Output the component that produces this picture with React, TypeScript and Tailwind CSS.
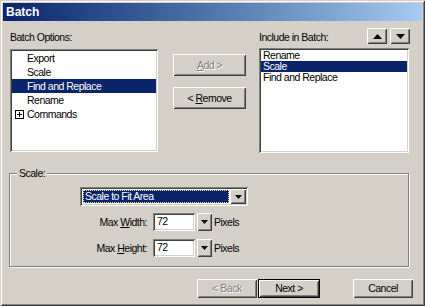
import React from 'react';

const raised =
    'bg-[#d4d0c8] shadow-[inset_1px_1px_0_#fff,inset_-1px_-1px_0_#404040,inset_2px_2px_0_#d4d0c8,inset_-2px_-2px_0_#808080]';
const sunken =
    'shadow-[inset_1px_1px_0_#808080,inset_-1px_-1px_0_#fff,inset_2px_2px_0_#404040,inset_-2px_-2px_0_#d4d0c8]';

const DownTri: React.FC<{ w?: number; h?: number }> = ({ w = 7, h = 4 }) => (
    <svg width={w} height={h} viewBox={`0 0 ${w} ${h}`} className="block">
        <polygon points={`0,0 ${w},0 ${w / 2},${h}`} fill="#000" />
    </svg>
);

const UpTri: React.FC<{ w?: number; h?: number }> = ({ w = 9, h = 5 }) => (
    <svg width={w} height={h} viewBox={`0 0 ${w} ${h}`} className="block">
        <polygon points={`0,${h} ${w},${h} ${w / 2},0`} fill="#000" />
    </svg>
);

const PlusBox: React.FC = () => (
    <svg width="9" height="9" viewBox="0 0 9 9" className="block">
        <rect x="0.5" y="0.5" width="8" height="8" fill="#fff" stroke="#000" />
        <path d="M2 4.5h5M4.5 2v5" stroke="#000" />
    </svg>
);

const Button: React.FC<{ className?: string; disabled?: boolean; children: React.ReactNode }> = ({
    className = '',
    disabled,
    children,
}) => (
    <div
        className={`${raised} flex items-center justify-center ${
            disabled ? 'text-[#808080] [text-shadow:1px_1px_0_#fff]' : 'text-black'
        } ${className}`}
    >
        {children}
    </div>
);

const options = ['Export', 'Scale', 'Find and Replace', 'Rename'];
const included = ['Rename', 'Scale', 'Find and Replace'];

const SizeRow: React.FC<{ label: React.ReactNode; className?: string }> = ({ label, className = '' }) => (
    <div className={`flex items-center ${className}`}>
        <div className="w-[137px] text-right">{label}</div>
        <div className={`ml-[6px] w-[42px] h-[18px] bg-white ${sunken} pl-[4px] pt-[2px] leading-[13px]`}>72</div>
        <div className={`ml-[2px] w-[15px] h-[18px] ${raised} flex items-center justify-center`}>
            <DownTri />
        </div>
        <div className="ml-[2px]">Pixels</div>
    </div>
);

export default function App() {
    return (
        <div className="w-[425px] h-[306px] bg-[#d4d0c8] p-[3px] flex flex-col text-[10.5px] tracking-[-0.5px] leading-[13px] text-black font-['Liberation_Sans',Arial,sans-serif] shadow-[inset_1px_1px_0_#d4d0c8,inset_-1px_-1px_0_#404040,inset_2px_2px_0_#fff,inset_-2px_-2px_0_#808080]">
            {/* Title bar */}
            <div className="h-[18px] shrink-0 bg-gradient-to-r from-[#0a246a] to-[#a6caf0] flex items-center pl-[3px] text-white font-bold text-[12px] tracking-normal">
                Batch
            </div>

            {/* Top section */}
            <div className="flex items-start">
                <div className="ml-[7px] w-[148px]">
                    <div className="mt-[10px] h-[13px]">Batch Options:</div>
                    <div className={`mt-[5px] h-[103px] bg-white ${sunken} p-[2px]`}>
                        {options.map((o) => (
                            <div
                                key={o}
                                className={`h-[14px] leading-[14px] pl-[15px] ${
                                    o === 'Find and Replace' ? 'bg-[#0a246a] text-white' : ''
                                }`}
                            >
                                {o}
                            </div>
                        ))}
                        <div className="h-[14px] leading-[14px] flex items-center">
                            <div className="ml-[3px] w-[12px]">
                                <PlusBox />
                            </div>
                            Commands
                        </div>
                    </div>
                </div>

                <div className="ml-[15px] w-[73px] flex flex-col">
                    <Button disabled className="mt-[33px] h-[22px]">
                        <span>
                            <u>A</u>dd &gt;
                        </span>
                    </Button>
                    <Button className="mt-[11px] h-[22px]">
                        <span>
                            &lt; <u>R</u>emove
                        </span>
                    </Button>
                </div>

                <div className="ml-[13px] w-[151px]">
                    <div className="mt-[7px] h-[16px] flex items-end justify-between">
                        <div>Include in Batch:</div>
                        <div className="flex gap-[3px]">
                            <Button className="w-[20px] h-[16px]">
                                <UpTri />
                            </Button>
                            <Button className="w-[20px] h-[16px]">
                                <DownTri w={9} h={5} />
                            </Button>
                        </div>
                    </div>
                    <div className={`mt-[4px] w-[150px] h-[105px] bg-white ${sunken} p-[2px]`}>
                        {included.map((o) => (
                            <div
                                key={o}
                                className={`h-[11px] leading-[11px] pl-[2px] ${
                                    o === 'Scale' ? 'bg-[#0a246a] text-white' : ''
                                }`}
                            >
                                {o}
                            </div>
                        ))}
                    </div>
                </div>
            </div>

            {/* Scale group */}
            <div className="relative ml-[6px] mt-[20px] w-[400px] h-[94px] border border-[#808080] shadow-[inset_1px_1px_0_#fff,1px_1px_0_#fff] pt-[13px]">
                <span className="absolute -top-[7px] left-[7px] px-[2px] bg-[#d4d0c8]">Scale:</span>
                <div className={`ml-[70px] w-[168px] h-[19px] bg-white ${sunken} p-[2px] flex`}>
                    <div className="flex-1 m-[1px] bg-[#0a246a] text-white outline outline-1 outline-dotted outline-[#e8d890] -outline-offset-1 pl-[2px] leading-[13px]">
                        Scale to Fit Area
                    </div>
                    <div className={`w-[16px] ${raised} flex items-center justify-center`}>
                        <DownTri />
                    </div>
                </div>
                <SizeRow
                    className="mt-[7px]"
                    label={
                        <>
                            Max <u>W</u>idth:
                        </>
                    }
                />
                <SizeRow
                    className="mt-[8px]"
                    label={
                        <>
                            Max <u>H</u>eight:
                        </>
                    }
                />
            </div>

            {/* Bottom buttons */}
            <div className="mt-[12px] flex justify-end pr-[9px]">
                <Button disabled className="w-[60px] h-[19px]">
                    &lt; Back
                </Button>
                <div className="ml-[1px] w-[62px] h-[19px] border border-black">
                    <Button className="w-full h-full">Next &gt;</Button>
                </div>
                <Button className="ml-[33px] w-[60px] h-[19px]">Cancel</Button>
            </div>
        </div>
    );
}
